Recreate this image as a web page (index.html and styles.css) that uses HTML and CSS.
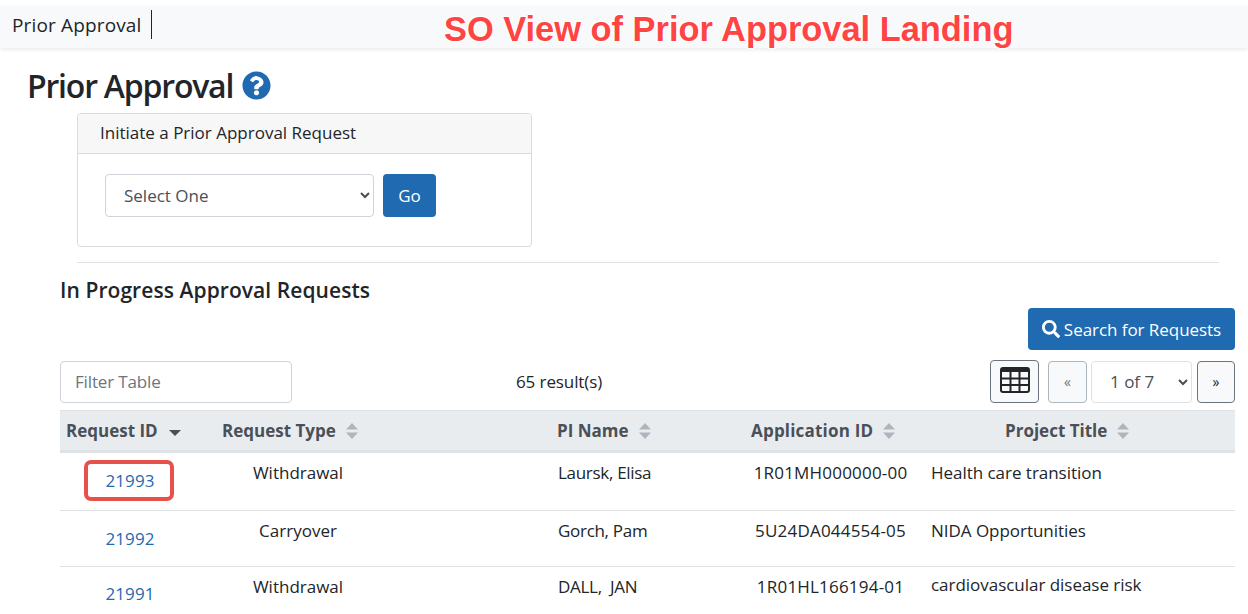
FILE: index.html
```html
<!DOCTYPE html>
<html lang="en">
<head>
<meta charset="utf-8">
<title>Prior Approval</title>
<link rel="stylesheet" href="styles.css">
</head>
<body>
<nav class="navbar">
  <span class="nav-item">Prior Approval</span>
  <span class="annotation">SO View of Prior Approval Landing</span>
</nav>
<main class="page">
  <h1 class="title">Prior Approval
    <svg class="help" viewBox="0 0 512 512"><path fill="#1f6ab0" d="M504 256c0 137-111 248-248 248S8 393 8 256 119 8 256 8s248 111 248 248zM262.700 90c-54.500 0-89.300 23-116.600 63.800-3.500 5.300-2.400 12.400 2.700 16.300l34.700 26.300c5.200 3.900 12.600 3 16.700-2.100 17.900-22.700 30.100-35.800 57.300-35.800 20.400 0 45.700 13.100 45.700 33 0 15-12.400 22.700-32.600 34-23.600 13.200-54.800 29.700-54.800 70.900V308c0 6.600 5.400 12 12 12h56c6.600 0 12-5.400 12-12v-1.300c0-28.600 83.400-29.700 83.400-107 0-58.200-60.400-102.300-117-102.300zM256 338c-25.400 0-46 20.600-46 46s20.600 46 46 46 46-20.600 46-46-20.600-46-46-46z"/></svg>
  </h1>
  <section class="card">
    <div class="card-header">Initiate a Prior Approval Request</div>
    <div class="card-body">
      <select class="select select-type"><option>Select One</option></select>
      <button class="btn btn-go">Go</button>
    </div>
  </section>
  <hr class="rule">
  <h2 class="subtitle">In Progress Approval Requests</h2>
  <div class="search-row">
    <button class="btn btn-search">
      <svg class="search-icon" viewBox="0 0 512 512"><path fill="#fff" d="M505 442.700 405.300 343c-4.500-4.500-10.600-7-17-7H372c27.600-35.300 44-79.700 44-128C416 93.100 322.900 0 208 0S0 93.100 0 208s93.100 208 208 208c48.300 0 92.700-16.400 128-44v16.300c0 6.400 2.500 12.500 7 17l99.700 99.700c9.400 9.400 24.600 9.400 33.900 0l28.300-28.300c9.400-9.400 9.400-24.600.1-34zM208 336c-70.700 0-128-57.200-128-128 0-70.700 57.200-128 128-128 70.700 0 128 57.200 128 128 0 70.700-57.200 128-128 128z"/></svg>
      Search for Requests
    </button>
  </div>
  <div class="toolbar">
    <input class="filter" type="text" placeholder="Filter Table">
    <span class="results">65 result(s)</span>
    <div class="pager">
      <button class="tool-btn btn-columns" aria-label="Columns">
        <svg class="grid-icon" viewBox="0 0 30 26"><rect x="1" y="1" width="28" height="24" rx="2" fill="none" stroke="#212529" stroke-width="2"/><rect x="1" y="1" width="28" height="4" rx="1.500" fill="#212529"/><path d="M10.500 4v20M19.500 4v20M1 11.500h28M1 18h28" stroke="#212529" stroke-width="2" fill="none"/></svg>
      </button>
      <button class="tool-btn page-btn page-prev">«</button>
      <select class="select select-page"><option>1 of 7</option></select>
      <button class="tool-btn page-btn page-next">»</button>
    </div>
  </div>
  <table class="grid">
    <thead>
      <tr>
        <th class="col-id"><span class="th-label">Request ID <svg class="sort sort-active" viewBox="0 0 12 8"><path d="M0 1h12L6 7z"/></svg></span></th>
        <th class="col-type"><span class="th-label">Request Type <svg class="sort" viewBox="0 0 12 16"><path d="M6 0l6 6.500H0zM6 16l6-6.500H0z"/></svg></span></th>
        <th class="col-pi"><span class="th-label">PI Name <svg class="sort" viewBox="0 0 12 16"><path d="M6 0l6 6.500H0zM6 16l6-6.500H0z"/></svg></span></th>
        <th class="col-app"><span class="th-label th-app">Application ID <svg class="sort" viewBox="0 0 12 16"><path d="M6 0l6 6.500H0zM6 16l6-6.500H0z"/></svg></span></th>
        <th class="col-title"><span class="th-label">Project Title <svg class="sort" viewBox="0 0 12 16"><path d="M6 0l6 6.500H0zM6 16l6-6.500H0z"/></svg></span></th>
      </tr>
    </thead>
    <tbody>
      <tr class="row-a">
        <td class="cell-id"><a class="id-link" href="#">21993</a><span class="callout"></span></td>
        <td class="cell-type">Withdrawal</td>
        <td class="cell-pi">Laursk, Elisa</td>
        <td class="cell-app">1R01MH000000-00</td>
        <td class="cell-title">Health care transition</td>
      </tr>
      <tr class="row-b">
        <td class="cell-id"><a class="id-link" href="#">21992</a></td>
        <td class="cell-type">Carryover</td>
        <td class="cell-pi">Gorch, Pam</td>
        <td class="cell-app">5U24DA044554-05</td>
        <td class="cell-title">NIDA Opportunities</td>
      </tr>
      <tr class="row-c">
        <td class="cell-id"><a class="id-link" href="#">21991</a></td>
        <td class="cell-type">Withdrawal</td>
        <td class="cell-pi">DALL,&nbsp; JAN</td>
        <td class="cell-app">1R01HL166194-01</td>
        <td class="cell-title">cardiovascular disease risk</td>
      </tr>
    </tbody>
  </table>
</main>
</body>
</html>
```
FILE: styles.css
```css
* { box-sizing: border-box; }
html, body { margin: 0; height: 614px; overflow: hidden; background: #fff; }
body {
  font-family: "Open Sans", "Noto Sans", sans-serif;
  font-size: 17px;
  color: #212529;
  padding-top: 6px;
}
.navbar {
  position: relative;
  height: 42px;
  background: #f8f9fa;
  box-shadow: 0 2px 4px rgba(0,0,0,.08);
  display: flex;
  align-items: flex-start;
  padding: 4px 0 0 12px;
}
.nav-item {
  font-size: 19px;
  line-height: 30px;
  height: 29px;
  padding-right: 9px;
  border-right: 1px solid #212529;
  letter-spacing: .15px;
}
.annotation {
  position: absolute;
  left: 444px;
  top: 3px;
  font: bold 34.4px/40px "Liberation Sans", Arial, sans-serif;
  color: #ff4444;
  white-space: nowrap;
  text-shadow: 1px 1px 0 #fff, -1px -1px 0 #fff, 1px -1px 0 #fff, -1px 1px 0 #fff;
}
.page { padding: 0 13px 0 60px; }
.title {
  margin: 16px 0 0 -33px;
  font-size: 32px;
  line-height: 44px;
  font-weight: 600;
  height: 43px;
  display: flex;
  align-items: center;
  gap: 9px;
  letter-spacing: -1.2px;
}
.help { width: 29px; height: 29px; }
.card {
  margin: 6px 0 0 17px;
  width: 455px;
  height: 134px;
  border: 1px solid #d9dbde;
  border-radius: 4px;
  overflow: hidden;
}
.card-header {
  height: 40px;
  background: #f7f7f7;
  border-bottom: 1px solid #d9dbde;
  padding-left: 22px;
  line-height: 38px;
}
.card-body { padding: 20px 27px; display: flex; gap: 9px; }
.select {
  font: inherit;
  color: #495057;
  background: #fff;
  border: 1px solid #ced4da;
  border-radius: 4px;
}
.select-type { width: 269px; height: 43px; padding-left: 14px; }
.btn {
  font: inherit;
  color: #fff;
  background: #1f6ab0;
  border: 0;
  border-radius: 4px;
}
.btn-go { width: 53px; height: 43px; }
.rule {
  margin: 15px 16px 0 17px;
  border: 0;
  border-top: 1px solid #dfe1e4;
}
.subtitle {
  margin: 12px 0 0;
  font-size: 21px;
  line-height: 30px;
  font-weight: 600;
  letter-spacing: .07px;
}
.search-row { display: flex; justify-content: flex-end; margin-top: 3px; }
.btn-search {
  width: 207px;
  height: 42px;
  display: flex;
  align-items: center;
  justify-content: center;
  gap: 4px;
  padding: 0;
  letter-spacing: -.05px;
}
.search-icon { width: 18px; height: 18px; }
.toolbar {
  position: relative;
  display: flex;
  align-items: center;
  margin-top: 10px;
  height: 43px;
}
.filter {
  font: inherit;
  width: 232px;
  height: 42px;
  border: 1px solid #ced4da;
  border-radius: 4px;
  padding-left: 14px;
  letter-spacing: -.15px;
}
.filter::placeholder { color: #6c757d; opacity: 1; }
.results { margin-left: 224px; letter-spacing: -.1px; }
.pager { margin-left: auto; display: flex; align-items: center; }
.tool-btn {
  font: inherit;
  height: 42px;
  background: #f8f9fa;
  border: 1px solid #6c757d;
  border-radius: 4px;
  padding: 0;
  color: #212529;
}
.btn-columns { width: 49px; height: 43px; margin-right: 9px; display: flex; align-items: center; justify-content: center; padding-bottom: 3px; }
.grid-icon { width: 30px; height: 26px; }
.page-btn { width: 38px; font-size: 14px; }
.page-prev { width: 39px; color: #6c757d; border-color: #adb5bd; }
.select-page { width: 101px; height: 42px; margin: 0 5px 0 4px; padding-left: 14px; border-color: #dee2e6; }
.grid {
  width: 1175px;
  margin-top: 7px;
  border-collapse: separate;
  border-spacing: 0;
  table-layout: fixed;
}
.col-id { width: 140px; padding-left: 6px; }
.col-type { width: 196px; padding-left: 22px; }
.col-pi { width: 344px; padding-left: 161px; }
.col-app { width: 185px; padding-left: 11px; }
.col-title { width: 310px; padding-left: 80px; }
th {
  height: 43px;
  background: #e9ecef;
  border-top: 1px solid #dee2e6;
  border-bottom: 3px solid #dee2e6;
  color: #495057;
  font-weight: 700;
  text-align: left;
  vertical-align: middle;
  padding-top: 0;
  padding-bottom: 0;
  padding-right: 0;
}
.th-label { display: inline-flex; align-items: center; gap: 10px; white-space: nowrap; }
.th-app { letter-spacing: .2px; }
.sort { width: 12px; height: 16px; fill: #adb5bd; }
.sort-active { fill: #495057; height: 8px; margin: 5px 0 0 1px; }
td {
  padding: 8px 0 0;
  vertical-align: top;
  border-bottom: 1px solid #dee2e6;
  line-height: 24px;
}
.row-a td { height: 58px; padding-top: 8px; }
.row-b td { height: 56px; }
.row-c td { height: 50px; border-bottom: 0; }
td.cell-id { position: relative; text-align: center; padding-top: 16px; letter-spacing: .1px; }
.row-c td.cell-id { padding-top: 15px; }
.cell-type, .cell-app { text-align: center; }
.cell-app { letter-spacing: .2px; padding-right: 4px; }
.cell-pi { padding-left: 162px; letter-spacing: -.3px; }
.cell-title { padding-left: 6px; letter-spacing: -.03px; }
.row-c .cell-title { padding-top: 6px; }
.id-link { color: #1f6ab0; text-decoration: none; }
.callout {
  position: absolute;
  left: 24px;
  top: 7px;
  width: 90px;
  height: 41px;
  border: 4px solid #e8504a;
  border-radius: 7px;
}
```
